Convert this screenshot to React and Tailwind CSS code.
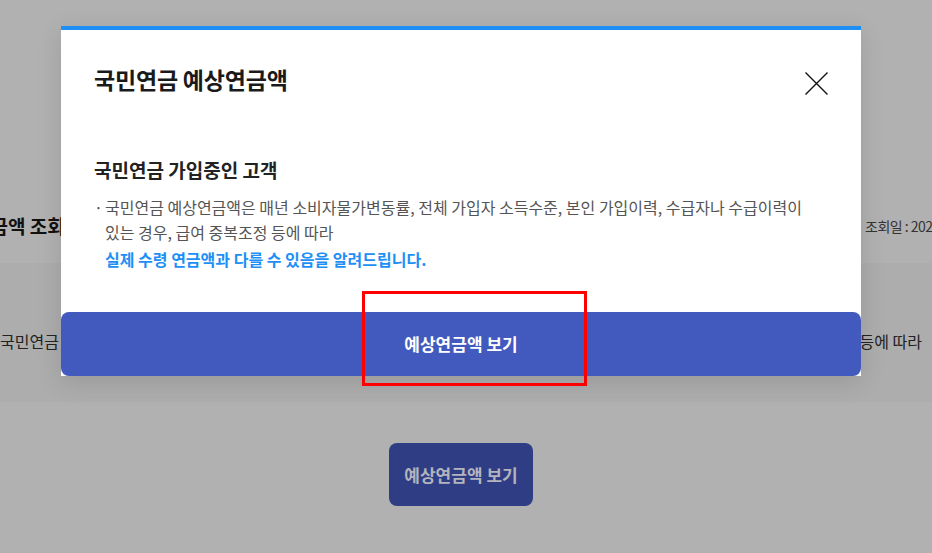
export default function App() {
  const font = { fontFamily: '"Noto Sans CJK KR", "Noto Sans", sans-serif' };

  return (
    <div className="relative w-full h-[553px] overflow-hidden bg-[#b1b1b1]" style={font}>
      {/* page behind the dimmed overlay */}
      <div className="grid grid-cols-[865px_1fr] items-center h-[24px] mt-[214px]">
        <h2 className="-ml-[62px] text-[19px] leading-[24px] font-bold text-[#111] whitespace-nowrap">
          예상연금액 조회
        </h2>
        <span className="text-[14px] text-[#333] whitespace-nowrap tracking-[-0.5px]">조회일 : 2024.05.20</span>
      </div>

      <div className="mt-[25px] h-[139px] bg-[#adadad] flex justify-between pt-[66px] pr-[10px]">
        <span className="text-[16px] leading-[25px] text-[#222]">국민연금</span>
        <span className="text-[16px] leading-[25px] text-[#222]">등에 따라</span>
      </div>

      <div className="flex justify-center pr-[10px] mt-[41px]">
        <button className="w-[144px] h-[63px] rounded-[8px] bg-[#2f3d85] text-[#b3b4bd] text-[17px] font-bold">
          예상연금액 보기
        </button>
      </div>

      {/* modal */}
      <div className="absolute left-[61px] top-[26px] w-[800px] bg-white border-t-4 border-[#1e8ff5] shadow-[0_6px_24px_rgba(0,0,0,0.12)]">
        <div className="px-[33px]">
          <div className="flex items-start justify-between pt-[34px]">
            <h1 className="text-[23px] leading-[30px] font-bold text-[#1a1a1a] tracking-[-0.2px]">국민연금 예상연금액</h1>
            <button className="mt-[8px] w-[23px] h-[23px]" aria-label="닫기">
              <svg viewBox="0 0 23 23" width="23" height="23">
                <path d="M0.5 0.5 L22.5 22.5 M22.5 0.5 L0.5 22.5" stroke="#111" strokeWidth="1.4" fill="none" />
              </svg>
            </button>
          </div>

          <h3 className="mt-[62px] text-[19px] leading-[26px] font-bold text-[#222]">
            국민연금 가입중인 고객
          </h3>

          <div className="mt-[12px] flex gap-[5px] text-[16px] leading-[25px] text-[#555]">
            <span className="w-[6px] text-[#555]">·</span>
            <div>
              <p>
                국민연금 예상연금액은 매년 소비자물가변동률, 전체 가입자 소득수준, 본인 가입이력, 수급자나 수급이력이
                <br />
                있는 경우, 급여 중복조정 등에 따라
              </p>
              <p className="mt-[2px] font-bold text-[#1e8ff5]">실제 수령 연금액과 다를 수 있음을 알려드립니다.</p>
            </div>
          </div>
        </div>

        <button className="mt-[40px] w-full h-[64px] rounded-[8px] bg-[#4259bd] text-white text-[17px] font-bold">
          예상연금액 보기
        </button>
      </div>

      {/* annotation box */}
      <div className="absolute left-[362px] top-[291px] w-[225px] h-[95px] border-[3px] border-[#ff0000]" />
    </div>
  );
}
